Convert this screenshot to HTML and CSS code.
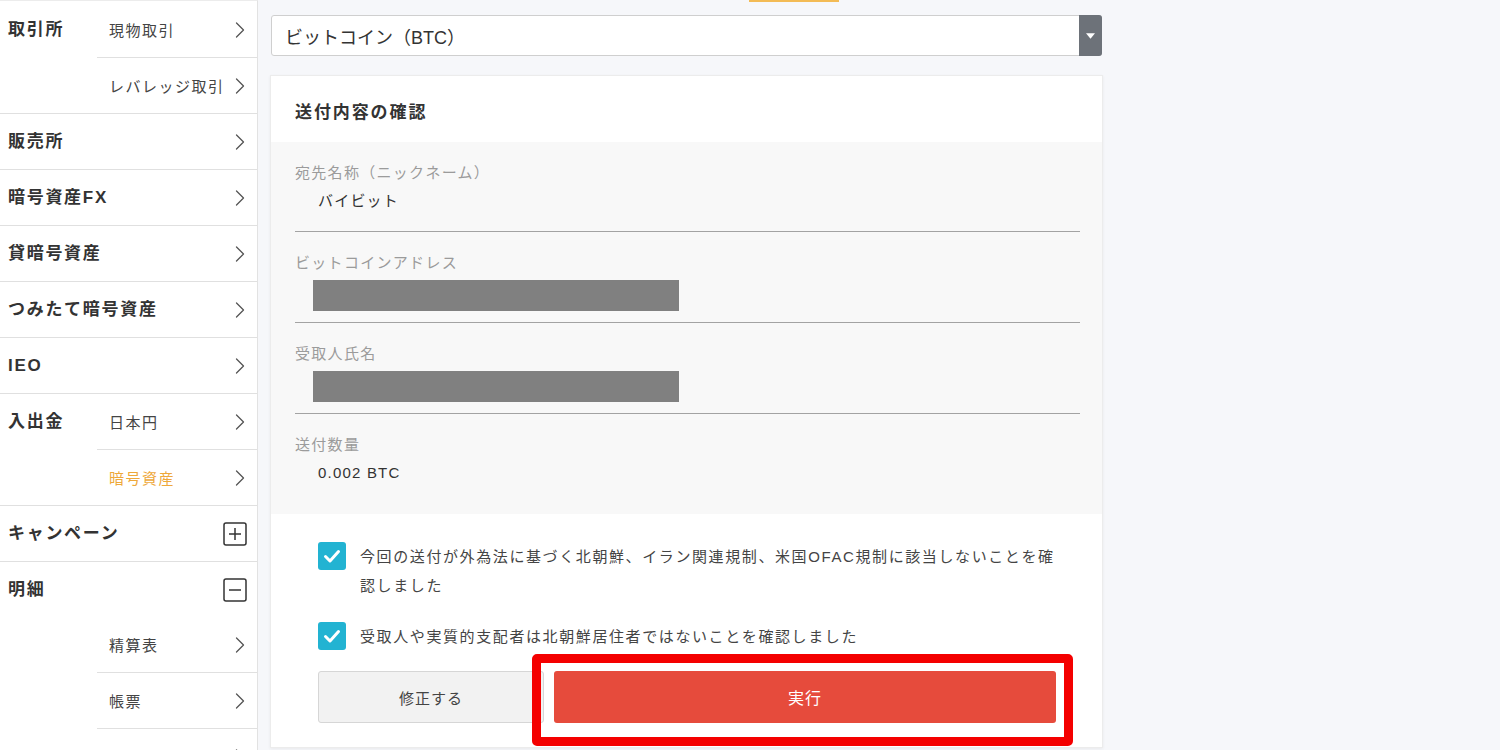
FILE: index.html
```html
<!DOCTYPE html>
<html lang="ja">
<head>
<meta charset="utf-8">
<title>送付内容の確認</title>
<link rel="stylesheet" href="styles.css">
</head>
<body>
<div class="page">
  <aside class="sidebar">
    <div class="group">
      <div class="glabel">取引所</div>
      <div class="subs">
        <div class="sub"><span>現物取引</span><svg class="chev" viewBox="0 0 10 16"><polyline points="1.5,1 8.5,8 1.5,15"/></svg></div>
        <div class="sub"><span>レバレッジ取引</span><svg class="chev" viewBox="0 0 10 16"><polyline points="1.5,1 8.5,8 1.5,15"/></svg></div>
      </div>
    </div>
    <div class="group"><div class="row"><span class="glabel">販売所</span><svg class="chev" viewBox="0 0 10 16"><polyline points="1.5,1 8.5,8 1.5,15"/></svg></div></div>
    <div class="group"><div class="row"><span class="glabel">暗号資産FX</span><svg class="chev" viewBox="0 0 10 16"><polyline points="1.5,1 8.5,8 1.5,15"/></svg></div></div>
    <div class="group"><div class="row"><span class="glabel">貸暗号資産</span><svg class="chev" viewBox="0 0 10 16"><polyline points="1.5,1 8.5,8 1.5,15"/></svg></div></div>
    <div class="group"><div class="row"><span class="glabel">つみたて暗号資産</span><svg class="chev" viewBox="0 0 10 16"><polyline points="1.5,1 8.5,8 1.5,15"/></svg></div></div>
    <div class="group"><div class="row"><span class="glabel">IEO</span><svg class="chev" viewBox="0 0 10 16"><polyline points="1.5,1 8.5,8 1.5,15"/></svg></div></div>
    <div class="group">
      <div class="glabel">入出金</div>
      <div class="subs">
        <div class="sub"><span>日本円</span><svg class="chev" viewBox="0 0 10 16"><polyline points="1.5,1 8.5,8 1.5,15"/></svg></div>
        <div class="sub active"><span>暗号資産</span><svg class="chev" viewBox="0 0 10 16"><polyline points="1.5,1 8.5,8 1.5,15"/></svg></div>
      </div>
    </div>
    <div class="group"><div class="row boxrow"><span class="glabel">キャンペーン</span><svg class="toggle" viewBox="0 0 24 24"><rect x="1" y="1" width="22" height="22" rx="2"/><line x1="6" y1="12" x2="18" y2="12"/><line x1="12" y1="6" x2="12" y2="18"/></svg></div></div>
    <div class="group open">
      <div class="row boxrow"><span class="glabel">明細</span><svg class="toggle" viewBox="0 0 24 24"><rect x="1" y="1" width="22" height="22" rx="2"/><line x1="6" y1="12" x2="18" y2="12"/></svg></div>
      <div class="spacer"></div>
      <div class="subs">
        <div class="sub bordered"><span>精算表</span><svg class="chev" viewBox="0 0 10 16"><polyline points="1.5,1 8.5,8 1.5,15"/></svg></div>
        <div class="sub bordered"><span>帳票</span><svg class="chev" viewBox="0 0 10 16"><polyline points="1.5,1 8.5,8 1.5,15"/></svg></div>
        <div class="sub"><span>CSV</span><svg class="chev" viewBox="0 0 10 16"><polyline points="1.5,1 8.5,8 1.5,15"/></svg></div>
      </div>
    </div>
  </aside>

  <main class="main">
    <div class="topstrip"><div class="tabmark"></div></div>
    <div class="select">
      <span class="select-text">ビットコイン（BTC）</span>
      <span class="select-btn"><svg viewBox="0 0 10 6"><polygon points="0,0 10,0 5,6"/></svg></span>
    </div>

    <section class="card">
      <h2 class="card-title">送付内容の確認</h2>
      <div class="details">
        <div class="field">
          <div class="flabel">宛先名称（ニックネーム）</div>
          <div class="fvalue">バイビット</div>
        </div>
        <div class="field">
          <div class="flabel">ビットコインアドレス</div>
          <div class="redact"></div>
        </div>
        <div class="field">
          <div class="flabel">受取人氏名</div>
          <div class="redact"></div>
        </div>
        <div class="field last">
          <div class="flabel">送付数量</div>
          <div class="fvalue">0.002 BTC</div>
        </div>
      </div>
      <div class="confirm">
        <label class="check">
          <span class="cbox"><svg viewBox="0 0 28 28"><polyline points="7.5,14.5 12,19 20.5,9.5"/></svg></span>
          <span class="ctext">今回の送付が外為法に基づく北朝鮮、イラン関連規制、米国OFAC規制に該当しないことを確<br>認しました</span>
        </label>
        <label class="check second">
          <span class="cbox"><svg viewBox="0 0 28 28"><polyline points="7.5,14.5 12,19 20.5,9.5"/></svg></span>
          <span class="ctext">受取人や実質的支配者は北朝鮮居住者ではないことを確認しました</span>
        </label>
        <div class="actions">
          <button class="btn btn-back">修正する</button>
          <button class="btn btn-exec">実行</button>
          <div class="highlight"></div>
        </div>
      </div>
    </section>
  </main>
</div>
</body>
</html>
```

FILE: styles.css
```css
html, body {
  margin: 0;
  padding: 0;
  height: 100%;
  overflow: hidden;
}
body {
  font-family: "Liberation Sans", "Noto Sans CJK JP", sans-serif;
  color: #333;
  background: #f6f7fa;
}
.page {
  display: flex;
  align-items: flex-start;
  min-height: 100%;
}

/* ---------- sidebar ---------- */
.sidebar {
  width: 257px;
  flex: 0 0 257px;
  background: #fff;
  border-right: 1px solid #e2e2e2;
  border-top: 1px solid #ececec;
  padding-top: 1px;
  min-height: 800px;
}
.group {
  display: grid;
  grid-template-columns: 97px 1fr;
  border-bottom: 1px solid #e0e0e0;
}
.group.open {
  border-bottom: none;
}
.glabel {
  padding-left: 8px;
  height: 55px;
  line-height: 55px;
  font-size: 17px;
  font-weight: 700;
  letter-spacing: 1.7px;
  color: #333;
  white-space: nowrap;
}
.row .glabel {
  padding-left: 0;
}
.row {
  grid-column: 1 / -1;
  display: flex;
  align-items: center;
  justify-content: space-between;
  height: 55px;
  padding: 0 12px 0 8px;
}
.row.boxrow {
  padding-right: 10px;
}
.subs {
  display: flex;
  flex-direction: column;
}
.sub {
  height: 55px;
  display: flex;
  align-items: center;
  justify-content: space-between;
  padding: 0 12px;
  font-size: 15px;
  letter-spacing: 1.5px;
  color: #444;
  border-bottom: 1px solid #e0e0e0;
}
.sub:last-child {
  border-bottom: none;
}
.sub.bordered {
  border-bottom: 1px solid #e0e0e0;
}
.sub.active {
  color: #eea83a;
}
.chev {
  width: 10px;
  height: 16px;
  fill: none;
  stroke: #555;
  stroke-width: 1.3;
  stroke-linecap: round;
  stroke-linejoin: round;
}
.toggle {
  width: 24px;
  height: 24px;
  fill: none;
  stroke: #333;
  stroke-width: 1.5;
}

/* ---------- main ---------- */
.main {
  flex: 1;
  padding-left: 12px;
}
.topstrip {
  height: 2px;
}
.tabmark {
  margin-left: 479px;
  width: 90px;
  height: 2px;
  background: #f3bb55;
}
.select {
  margin: 13px 0 0 1px;
  width: 831px;
  height: 41px;
  box-sizing: border-box;
  border: 1px solid #cfcfcf;
  border-radius: 3px;
  background: #fff;
  display: flex;
  align-items: center;
  justify-content: space-between;
}
.select-text {
  padding-left: 13px;
  font-size: 18px;
  color: #333;
}
.select-btn {
  width: 23px;
  align-self: stretch;
  margin: -1px -1px -1px 0;
  background: #6d7279;
  border-radius: 0 3px 3px 0;
  display: flex;
  align-items: center;
  justify-content: center;
}
.select-btn svg {
  width: 9px;
  height: 6px;
  fill: #fff;
}

.card {
  margin-top: 19px;
  width: 833px;
  background: #fff;
  border: 1px solid #ececec;
  box-sizing: border-box;
  box-shadow: 0 1px 3px rgba(0,0,0,0.06);
}
.card-title {
  margin: 0;
  height: 66px;
  line-height: 74px;
  padding-left: 24px;
  font-size: 17px;
  font-weight: 700;
  letter-spacing: 1.9px;
  color: #333;
}
.details {
  background: #f8f8f8;
  padding: 0 22px 30px 24px;
}
.field {
  padding-top: 20px;
  border-bottom: 1px solid #a3a3a3;
}
.field.last {
  border-bottom: none;
}
.flabel {
  line-height: 22px;
  font-size: 15px;
  letter-spacing: 1.3px;
  color: #9b9b9b;
}
.fvalue {
  margin-top: 6px;
  margin-bottom: 19px;
  padding-left: 23px;
  line-height: 22px;
  font-size: 15px;
  letter-spacing: 1.2px;
  color: #333;
}
.field.last .fvalue {
  margin-bottom: 0;
}
.redact {
  margin: 6px 0 11px 18px;
  width: 366px;
  height: 31px;
  background: #808080;
}

.confirm {
  padding: 28px 46px 24px 47px;
}
.check {
  display: flex;
  align-items: flex-start;
  gap: 14px;
}
.check.second {
  margin-top: 22px;
}
.cbox {
  flex: 0 0 28px;
  width: 28px;
  height: 28px;
  border-radius: 3px;
  background: #22b3d2;
  display: flex;
}
.cbox svg {
  width: 28px;
  height: 28px;
  fill: none;
  stroke: #fff;
  stroke-width: 3;
  stroke-linecap: round;
  stroke-linejoin: round;
}
.ctext {
  font-size: 15px;
  line-height: 29px;
  letter-spacing: 1.6px;
  color: #444;
  white-space: nowrap;
}
.actions {
  position: relative;
  margin-top: 20px;
  display: flex;
  gap: 10px;
}
.btn {
  height: 52px;
  font-family: inherit;
  border-radius: 3px;
  cursor: pointer;
}
.btn-back {
  width: 226px;
  background: #f2f2f2;
  border: 1px solid #d6d6d6;
  font-size: 15px;
  letter-spacing: 1px;
  color: #444;
}
.btn-exec {
  flex: 1;
  background: #e64b3c;
  border: none;
  font-size: 16px;
  letter-spacing: 1px;
  color: #fff;
}
.highlight {
  position: absolute;
  left: 214px;
  top: -17px;
  width: 541px;
  height: 92px;
  box-sizing: border-box;
  border: 9px solid #f40000;
  border-radius: 5px;
  pointer-events: none;
}
```
